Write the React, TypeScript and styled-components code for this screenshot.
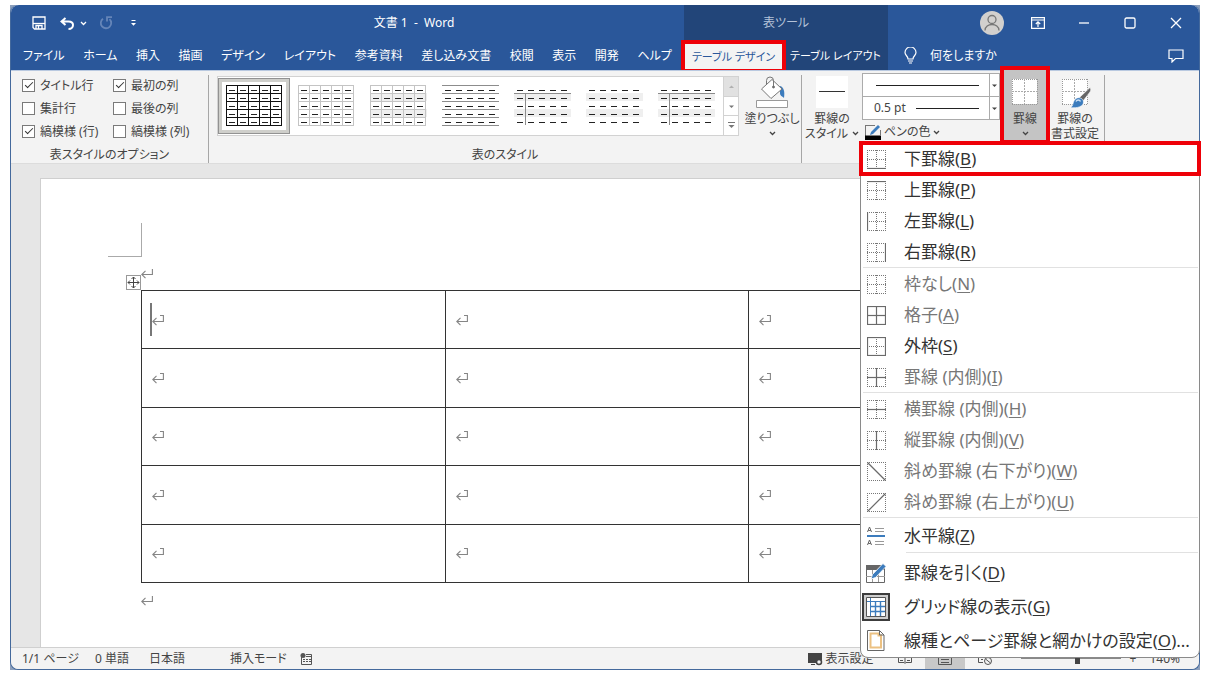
import React from "react";
import styled, { createGlobalStyle, css } from "styled-components";

const BLUE = "#2a579a";
const DARK_BLUE = "#224579";
const RED = "#ee0008";

const GlobalStyle = createGlobalStyle`
  *, *::before, *::after { box-sizing: border-box; }
  body {
    margin: 0;
    background: #fff;
    color: #444;
    font: 12px/16px "Noto Sans", "Noto Sans CJK JP", sans-serif;
    font-feature-settings: "palt";
    overflow: hidden;
  }
  button, input, select { font: inherit; font-feature-settings: inherit; color: inherit; margin: 0; }
  button { border: 0; padding: 0; background: none; white-space: nowrap; }
  svg { display: block; flex: none; }
`;

/* ---------- window frame ---------- */

const Desktop = styled.div`
  margin: 5px 9px 7px 10px;
  background: #8c9fbc;
`;

const AppWindow = styled.div`
  display: flex;
  flex-direction: column;
  min-height: calc(100vh - 12px);
  border: 1px solid #44699c;
  border-top: 0;
  border-radius: 8px;
  background: #e6e6e6;
`;

const Header = styled.header`
  display: flex;
  height: 65px;
  background: ${BLUE};
  border-radius: 8px 8px 0 0;
  color: #fff;
`;

const HeaderMain = styled.div`
  flex: 0 0 673px;
`;

const HeaderEnd = styled.div`
  flex: 1;
`;

const HeaderContext = styled.div`
  flex: 0 0 204px;
  background: ${DARK_BLUE};
`;

const TitleRow = styled.div`
  display: flex;
  align-items: center;
  height: 36px;
`;

const ContextTitle = styled(TitleRow)`
  justify-content: center;
  color: #b4c2d8;
`;

const QuickAccess = styled.div`
  display: flex;
  align-items: center;
  gap: 8px;
  padding-left: 21px;
`;

const IconButton = styled.button<{ $dim?: boolean }>`
  display: flex;
  align-items: center;
  justify-content: center;
  color: ${(p) => (p.$dim ? "#6585b8" : "#fff")};
`;

const UndoButton = styled(IconButton)`
  gap: 5px;
  padding: 0 4px 0 6px;
`;

const CustomizeButton = styled(IconButton)`
  padding-left: 10px;
`;

const DocTitle = styled.h1`
  flex: 1;
  margin: 0;
  padding-left: 8px;
  font-size: 12px;
  font-weight: 400;
  text-align: center;
  white-space: pre;
`;

const TabRow = styled.nav`
  display: flex;
  justify-content: space-between;
  height: 29px;
  padding: 0 12px;
`;

const ContextTabs = styled(TabRow)`
  padding: 0;
  font-size: 11px;
`;

const Tab = styled.button<{ $active?: boolean }>`
  display: flex;
  align-items: center;
  justify-content: center;
  color: #fff;
  ${(p) =>
    p.$active &&
    css`
      flex: 0 0 99px;
      margin-top: 2px;
      background: #f3f3f3;
      color: ${BLUE};
      outline: 4px solid ${RED};
      outline-offset: -1px;
    `}
`;

const PlainContextTab = styled(Tab)`
  flex: 1;
`;

const WindowButtons = styled.div`
  display: flex;
  flex: 1;
  justify-content: flex-end;
`;

const WindowButton = styled(IconButton)`
  width: 46px;
  height: 32px;
`;

const TellMeRow = styled.div`
  display: flex;
  align-items: center;
  gap: 13px;
  height: 29px;
  padding: 0 15px 0 16px;
`;

const TellMe = styled.button`
  flex: 1;
  text-align: left;
`;

/* ---------- ribbon ---------- */

const Ribbon = styled.section`
  display: flex;
  height: 94px;
  background: #f3f3f3;
  border-top: 1px solid #b9c9e0;
  border-bottom: 1px solid #dcdcdc;
`;

const Group = styled.div`
  display: flex;
  flex-direction: column;
  margin: 4px 0 0;
  padding-bottom: 0;
  border-right: 1px solid #a6a6a6;
`;

const GroupBody = styled.div`
  display: flex;
  flex: 1;
`;

const GroupLabel = styled.div`
  text-align: center;
`;

const OptionGrid = styled.div`
  display: grid;
  grid-template-columns: 91px 95px;
  grid-auto-rows: 23px;
  flex: 1;
  margin-top: -1px;
  padding-left: 11px;
`;

const Option = styled.label`
  display: flex;
  align-items: center;
  gap: 5px;
  white-space: nowrap;
`;

const Check = styled.input`
  appearance: none;
  flex: none;
  width: 13px;
  height: 13px;
  border: 1px solid #7a7a7a;
  background: #fff;
  &:checked::after {
    content: "";
    display: block;
    width: 8px;
    height: 4px;
    margin: 2px 0 0 2px;
    border: solid #333;
    border-width: 0 0 1px 1px;
    transform: rotate(-45deg);
  }
`;

const Gallery = styled.div`
  display: flex;
  width: 522px;
  height: 60px;
  margin: 1px 4px 0 8px;
  border: 1px solid #d2d2d2;
  background: #fff;
`;

const StyleButton = styled.button<{ $selected?: boolean }>`
  display: flex;
  align-items: center;
  justify-content: center;
  width: 72px;
  height: 56px;
  margin-top: 1px;
  ${(p) =>
    p.$selected &&
    css`
      border: 1px solid #929292;
      box-shadow: inset 0 0 0 3px #cfcfcb;
    `}
`;

const GalleryScroll = styled.div`
  display: flex;
  flex-direction: column;
  width: 15px;
  margin-left: auto;
  border-left: 1px solid #d2d2d2;
`;

const ScrollButton = styled.button<{ $off?: boolean }>`
  display: flex;
  flex: 1;
  align-items: center;
  justify-content: center;
  background: ${(p) => (p.$off ? "#e1e1e1" : "#fff")};
  color: ${(p) => (p.$off ? "#b0b0b0" : "#777")};
  & + & { border-top: 1px solid #d2d2d2; }
`;

const BigButton = styled.button<{ $width: number; $pressed?: boolean }>`
  display: flex;
  flex-direction: column;
  align-items: center;
  width: ${(p) => p.$width}px;
  height: ${(p) => (p.$pressed ? 70 : 66)}px;
  padding-top: ${(p) => (p.$pressed ? 6 : 1)}px;
  line-height: 15px;
  ${(p) =>
    p.$pressed &&
    css`
      background: #c4c4c4;
      outline: 4px solid ${RED};
    `}
`;

const BigLabel = styled.span`
  display: flex;
  align-items: center;
  gap: 4px;
  height: 15px;
  &:first-of-type { margin-top: 3px; }
`;

const PenColumn = styled.div`
  display: flex;
  flex-direction: column;
  width: 138px;
  margin-top: -2px;
`;

const LineBox = styled.div`
  display: flex;
  align-items: center;
  width: 138px;
  height: 24px;
  margin-bottom: -1px;
  padding-left: 11px;
  border: 1px solid #ababab;
  background: #fff;
`;

const WeightSelect = styled.select`
  appearance: none;
  width: 40px;
  padding: 0;
  border: 0;
  background: none;
`;

const SampleLine = styled.span`
  flex: 1;
  height: 1px;
  margin: 0 10px 0 2px;
  background: #222;
`;

const SelectArrow = styled.span`
  display: flex;
  align-items: center;
  justify-content: center;
  width: 10px;
  height: 22px;
  border-left: 1px solid #ababab;
`;

const PenColor = styled.button`
  display: flex;
  align-items: center;
  gap: 3px;
  height: 24px;
  padding: 2px 0 0 3px;
`;

const BordersSlot = styled.div`
  position: relative;
  z-index: 2;
  margin: -5px 0 0 4px;
`;

/* ---------- borders menu ---------- */

const Menu = styled.ul`
  position: absolute;
  top: 72px;
  left: -144px;
  width: 340px;
  margin: 0;
  padding: 0;
  list-style: none;
  border: 1px solid #8a8a8a;
  border-radius: 0 0 8px 8px;
  background: #fff;
  font-size: 17px;
`;

const MenuItem = styled.li<{ $tall?: boolean }>`
  display: flex;
  height: ${(p) => (p.$tall ? 34 : 31)}px;
`;

const MenuButton = styled.button<{ $off?: boolean; $marked?: boolean }>`
  display: flex;
  flex: 1;
  align-items: center;
  gap: 14px;
  padding: 1px 0 0 1px;
  color: ${(p) => (p.$off ? "#777" : "#333")};
  ${(p) =>
    p.$marked &&
    css`
      outline: 4px solid ${RED};
      outline-offset: -2px;
    `}
  u { text-underline-offset: 2px; text-decoration-thickness: 1px; }
`;

const MenuIcon = styled.span<{ $on?: boolean }>`
  display: flex;
  align-items: center;
  justify-content: center;
  width: 28px;
  height: 28px;
  ${(p) =>
    p.$on &&
    css`
      border: 2px solid #3c3c3c;
      background: #cdcdcd;
    `}
`;

const MenuRule = styled.li<{ $inset?: boolean }>`
  height: ${(p) => (p.$inset ? 3 : 1)}px;
  margin: 0 1px 0 ${(p) => (p.$inset ? 45 : 2)}px;
  border-top: 1px solid #e1e1e1;
`;

/* ---------- document ---------- */

const Workspace = styled.main`
  display: flex;
  flex: 1;
  min-height: 483px;
  padding: 14px 0 0 29px;
`;

const Page = styled.article`
  flex: 1;
  padding: 44px 100px 0 67px;
  border: 1px solid #cfcfcf;
  border-width: 1px 0 0 1px;
  background: #fff;
  overflow: hidden;
`;

const CornerMark = styled.div`
  width: 34px;
  height: 34px;
  border: solid #aaa;
  border-width: 0 1px 1px 0;
`;

const BodyText = styled.div`
  padding: 9px 0 0 33px;
`;

const Paragraph = styled.p`
  position: relative;
  margin: 0;
  height: 24px;
  padding-top: 2px;
`;

const TableHandle = styled.button`
  position: absolute;
  left: -15px;
  top: 9px;
  width: 15px;
  height: 15px;
  border: 1px solid #999;
  background: #fff;
`;

const DocTable = styled.table`
  width: 912px;
  height: 293px;
  table-layout: fixed;
  border-collapse: collapse;
`;

const Cell = styled.td`
  padding: 0 0 0 8px;
  border: 1px solid #333;
`;

const CellLine = styled.div<{ $caret?: boolean }>`
  display: flex;
  align-items: center;
  height: 33px;
  border-left: 2px solid ${(p) => (p.$caret ? "#777" : "transparent")};
`;

const AfterTable = styled.p`
  margin: 0;
  padding-top: 12px;
`;

/* ---------- status bar ---------- */

const StatusBar = styled.footer`
  display: flex;
  align-items: center;
  height: 22px;
  padding-left: 11px;
  border-top: 1px solid #d0d0d0;
  border-radius: 0 0 8px 8px;
  background: #f3f3f3;
`;

const StatusItem = styled.span<{ $width?: number }>`
  display: flex;
  align-items: center;
  gap: 2px;
  width: ${(p) => (p.$width ? p.$width + "px" : "auto")};
  white-space: nowrap;
`;

const StatusEnd = styled.div`
  display: flex;
  align-items: center;
  align-self: stretch;
  margin-left: auto;
  padding-right: 19px;
`;

const ViewButton = styled.button<{ $on?: boolean }>`
  display: flex;
  align-items: center;
  justify-content: center;
  align-self: stretch;
  width: 40px;
  background: ${(p) => (p.$on ? "#c8c8c8" : "none")};
`;

const ZoomSlider = styled.input`
  appearance: none;
  width: 100px;
  height: 11px;
  margin: 0 8px 0 16px;
  background: linear-gradient(#888, #888) center / 100% 1px no-repeat;
  &::-webkit-slider-thumb {
    appearance: none;
    width: 5px;
    height: 11px;
    background: #444;
  }
`;

/* ---------- drawings ---------- */

const Chevron = ({ color = "currentColor" }: { color?: string }) => (
  <svg width="7" height="5" viewBox="0 0 7 5" fill="none" stroke={color} strokeWidth="1.3">
    <path d="M1 1l2.5 2.5L6 1" />
  </svg>
);

const Triangle = ({ up, bar }: { up?: boolean; bar?: boolean }) => (
  <svg width="7" height="7" viewBox="0 0 7 7" fill="currentColor">
    {bar && <path d="M0 0h7v1H0z" />}
    <path d={up ? "M1 5h5L3.5 2.5z" : bar ? "M0.5 3h6L3.5 6z" : "M1 2.5h5L3.5 5z"} />
  </svg>
);

const CustomizeIcon = () => (
  <svg width="5" height="7" viewBox="0 0 5 7" fill="currentColor">
    <path d="M.5 0h4v1h-4zM0 3h5L2.500 5.800z" />
  </svg>
);

const ReturnMark = () => (
  <svg width="12" height="12" viewBox="0 0 12 12" fill="none" stroke="#858585" strokeWidth="1.1">
    <path d="M8 1.5h3.4v6H1M4.500 3.800L.8 7.500l3.700 3.700" />
  </svg>
);

const SmallReturn = () => (
  <svg width="12" height="12" viewBox="0 0 12 12" fill="none" stroke="#858585" strokeWidth="1.1">
    <path d="M11.400 1v5.500H1M4.500 2.800L.8 6.500l3.700 3.700" />
  </svg>
);

type Look = { grid?: string; rows?: boolean; head?: boolean; bands?: boolean };

const StyleSample = ({ grid, rows, head, bands }: Look) => {
  const xs = [0, 1, 2, 3, 4];
  return (
    <svg width="57" height="42" viewBox="0 0 57 42" shapeRendering="crispEdges">
      {bands && <path d="M0 8h57v8H0zM0 24h57v8H0z" fill="#efefef" />}
      {grid &&
        [0, 1, 2, 3, 4, 5].map((i) => (
          <path key={i} d={`M0 ${i * 8 + 0.5}h56M${i * 11 + 0.5} 0v41`} stroke={grid} />
        ))}
      {rows && [0, 1, 2, 3, 4, 5].map((i) => <path key={i} d={`M0 ${i * 8 + 0.5}h57`} stroke="#8c8c8c" />)}
      {head && <path d="M0 8.500h57M11.500 8v32" stroke="#8c8c8c" />}
      {xs.map((r) => xs.map((c) => <path key={`${r}${c}`} d={`M${c * 11 + 3} ${r * 8 + 5.5}h6`} stroke="#222" />))}
    </svg>
  );
};

type Edge = "top" | "bottom" | "left" | "right" | "midH" | "midV" | "down" | "up";

const EDGE_PATHS: Record<Edge, string> = {
  top: "M0 .5h19",
  bottom: "M0 18.5h19",
  left: "M.5 0v19",
  right: "M18.5 0v19",
  midH: "M0 9.5h19",
  midV: "M9.5 0v19",
  down: "M.5 .5l18 18",
  up: "M.5 18.5l18-18",
};

const BorderIcon = ({ solid = [], plain }: { solid?: Edge[]; plain?: boolean }) => (
  <svg width="19" height="19" viewBox="0 0 19 19" fill="none">
    {(Object.keys(EDGE_PATHS) as Edge[])
      .filter((e) => e !== "down" && e !== "up" && !solid.includes(e) && !(plain && e.startsWith("mid")))
      .map((e) => (
        <path key={e} d={EDGE_PATHS[e]} stroke="#777" strokeDasharray="1 1" />
      ))}
    {solid.map((e) => (
      <path key={e} d={EDGE_PATHS[e]} stroke="#6a6a6a" strokeWidth="1.2" />
    ))}
  </svg>
);

const BigBorderIcon = ({ brush }: { brush?: boolean }) => (
  <svg width="32" height="32" viewBox="0 0 32 32" fill="none">
    <path d="M3 3h25v25H3z" fill="#fff" />
    <path d="M3.5 3v25M28.5 3v25M3 3.5h26M3 28.5h26" stroke="#999" strokeDasharray="1 1" />
    <path d="M15.5 3v25M3 15.5h26" stroke="#aaa" strokeDasharray="2 1" />
    {brush && (
      <>
        <path d="M31 11.500c1 1.500 1 3 0 4.500l-7 9-3.500-3.500z" fill="#666" stroke="#fff" strokeWidth=".6" />
        <path d="M11 31.500c4-1 2-6 6-9 3-2 7.500 0 7.500 3.500 0 4.500-6 6.500-13.500 5.500z" fill="#3c7cbd" stroke="#fff" strokeWidth=".6" />
        <path d="M17 25.500c1-2 3.500-2 4.500 0" stroke="#cfe2f5" strokeWidth="1.500" />
      </>
    )}
  </svg>
);

const BucketIcon = () => (
  <svg width="34" height="32" viewBox="0 0 34 32" fill="none" stroke="#777">
    <path d="M25 10c4 1 5 6 4 12-2-2-4-2-4-5z" fill="#3c7cbd" stroke="none" />
    <path d="M17 3.500L27 13 16 22.500 6.500 13z" fill="#fff" />
    <path d="M11.500 9V4.500a3.500 3.500 0 0 1 7 0V10" />
    <circle cx="18.500" cy="11" r="1" fill="#555" />
    <path d="M1.500 24.500h31v7h-31z" fill="#fff" stroke="#999" />
  </svg>
);

const LineStyleIcon = () => (
  <svg width="32" height="32" viewBox="0 0 32 32">
    <path d="M0 0h32v32H0z" fill="#fff" />
    <path d="M3 15.500h26" stroke="#333" />
  </svg>
);

const PenIcon = () => (
  <svg width="16" height="15" viewBox="0 0 16 15" fill="none">
    <path d="M1 .5h9M.5 0v11M15.500 5v5" stroke="#777" />
    <path d="M5 10l1-3 7-7 2 2-7 7z" fill="#3c7cbd" />
    <path d="M0 10.500h16V15H0z" fill="#000" />
  </svg>
);

const HorizontalRuleIcon = () => (
  <svg width="20" height="20" viewBox="0 0 20 20" fill="none" stroke="#666">
    <path d="M1.500 6l2-5 2 5M2.200 4.500h2.600M1.500 19l2-5 2 5M2.200 17.500h2.600" />
    <path d="M9 2.500h9M9 5.500h9M9 15.500h9M9 18.500h9" stroke="#999" />
    <path d="M1 10h18" stroke="#3c7cbd" strokeWidth="2" />
  </svg>
);

const DrawTableIcon = () => (
  <svg width="22" height="22" viewBox="0 0 22 22" fill="none">
    <path d="M1.500 3.500h18v17h-18z" fill="#fff" stroke="#666" />
    <path d="M1 3h19v5H1z" fill="#666" />
    <path d="M7.500 8v12M13.500 8v12M1 14.500h19" stroke="#999" />
    <path d="M6 17l1.500-4.500L18 1.500l3 3L10.500 15.500z" fill="#3c7cbd" stroke="#fff" strokeWidth=".8" />
  </svg>
);

const GridlinesIcon = () => (
  <svg width="20" height="20" viewBox="0 0 20 20" fill="none">
    <path d="M.5 .5h19v19H.5z" fill="#fff" stroke="#555" />
    <path d="M4.500 1v18M1 4.500h18" stroke="#3c7cbd" />
    <path d="M9.500 4v15M14.500 4v15M4 9.500h15M4 14.500h15" stroke="#3c7cbd" strokeWidth="1.400" />
  </svg>
);

const PageBorderIcon = () => (
  <svg width="18" height="21" viewBox="0 0 18 21" fill="none">
    <path d="M.5 .5h12l4.500 4.500v15.500H.5z" fill="#fff" stroke="#666" />
    <path d="M3.500 3.500h8v2h2.500v12H3.500z" stroke="#ecc182" strokeWidth="2" />
    <path d="M12.500 .5V5H17" stroke="#666" />
  </svg>
);

const SaveIcon = () => (
  <svg width="14" height="14" viewBox="0 0 14 14" fill="none" stroke="#fff" strokeWidth="1.300">
    <path d="M1 1h12v12H2.500L1 11.500z" />
    <path d="M1 7.500h12" />
    <path d="M4 13V9.500h6V13M6.500 10v3" />
  </svg>
);

const UndoIcon = () => (
  <svg width="15" height="13" viewBox="0 0 15 13" fill="none" stroke="currentColor" strokeWidth="2">
    <path d="M5.500 1L1.500 4.500l4 3.500M2 4.500h6.500c3 0 4.500 1.500 4.500 3.500s-1.500 4-4.500 4" />
  </svg>
);

const RedoIcon = () => (
  <svg width="14" height="14" viewBox="0 0 14 14" fill="none" stroke="currentColor" strokeWidth="1.800">
    <path d="M4 2.800A5.200 5.200 0 1 0 10.500 3.200" />
    <path d="M8 5.500V1.200h5" />
  </svg>
);

const AvatarIcon = () => (
  <svg width="24" height="24" viewBox="0 0 24 24" fill="none" stroke="#777" strokeWidth="1.300">
    <circle cx="12" cy="12" r="12" fill="#d2d0ce" stroke="none" />
    <circle cx="12" cy="8.500" r="4" />
    <path d="M5 19.500c0-8 14-8 14 0" />
  </svg>
);

const BulbIcon = () => (
  <svg width="13" height="17" viewBox="0 0 13 17" fill="none" stroke="#fff" strokeWidth="1.200">
    <path d="M4 12c0-3-3-3.500-3-6.500a5.300 5.300 0 0 1 11 0C12 8.500 9 9 9 12zM4 14h5M5 16h3" />
  </svg>
);

const CommentIcon = () => (
  <svg width="16" height="14" viewBox="0 0 16 14" fill="none" stroke="#fff" strokeWidth="1.200">
    <path d="M1 1h14v8.500H7.500L4 13V9.500H1z" />
  </svg>
);

const HandleIcon = () => (
  <svg width="13" height="13" viewBox="0 0 13 13" fill="none" stroke="#444">
    <path d="M6.500 1v11M1 6.500h11M4.500 3l2-2 2 2M4.500 10l2 2 2-2M3 4.500l-2 2 2 2M10 4.500l2 2-2 2" />
  </svg>
);

const MacroIcon = () => (
  <svg width="13" height="12" viewBox="0 0 13 12" fill="none" stroke="#555">
    <path d="M1.500 4v7.500h10v-10H6M6 3.500h6" />
    <path d="M3 6.500h8M3 8.500h8" strokeDasharray="2 1" />
    <circle cx="3" cy="2.500" r="2.500" fill="#555" stroke="none" />
  </svg>
);

const DisplayIcon = () => (
  <svg width="15" height="14" viewBox="0 0 15 14" fill="none">
    <path d="M0 1h14v7H9v3H0z" fill="#444" />
    <path d="M3 12.500h4" stroke="#444" />
    <circle cx="11" cy="10" r="2.500" fill="#f3f3f3" stroke="#444" strokeWidth="1.500" />
  </svg>
);

/* ---------- content ---------- */

const TABS = [
  "ファイル", "ホーム", "挿入", "描画", "デザイン", "レイアウト",
  "参考資料", "差し込み文書", "校閲", "表示", "開発", "ヘルプ",
];

const OPTIONS: [string, boolean][] = [
  ["タイトル行", true],
  ["最初の列", true],
  ["集計行", false],
  ["最後の列", false],
  ["縞模様 (行)", true],
  ["縞模様 (列)", false],
];

const LOOKS: Look[] = [
  { grid: "#111" },
  { grid: "#c4c4c4" },
  { grid: "#c4c4c4", bands: true },
  { rows: true },
  { head: true, bands: true },
  { bands: true },
  { head: true, bands: true },
];

type Entry = {
  text: string;
  letter: string;
  after?: string;
  icon: React.ReactNode;
  off?: boolean;
  marked?: boolean;
  tall?: boolean;
  on?: boolean;
};

const SECTIONS: Entry[][] = [
  [
    { text: "下罫線", letter: "B", icon: <BorderIcon solid={["bottom"]} />, marked: true },
    { text: "上罫線", letter: "P", icon: <BorderIcon solid={["top"]} /> },
    { text: "左罫線", letter: "L", icon: <BorderIcon solid={["left"]} /> },
    { text: "右罫線", letter: "R", icon: <BorderIcon solid={["right"]} /> },
  ],
  [
    { text: "枠なし", letter: "N", icon: <BorderIcon />, off: true },
    { text: "格子", letter: "A", icon: <BorderIcon solid={["top", "bottom", "left", "right", "midH", "midV"]} />, off: true },
    { text: "外枠", letter: "S", icon: <BorderIcon solid={["top", "bottom", "left", "right"]} /> },
    { text: "罫線 (内側)", letter: "I", icon: <BorderIcon solid={["midH", "midV"]} />, off: true },
  ],
  [
    { text: "横罫線 (内側)", letter: "H", icon: <BorderIcon solid={["midH"]} />, off: true },
    { text: "縦罫線 (内側)", letter: "V", icon: <BorderIcon solid={["midV"]} />, off: true },
    { text: "斜め罫線 (右下がり)", letter: "W", icon: <BorderIcon solid={["down"]} plain />, off: true },
    { text: "斜め罫線 (右上がり)", letter: "U", icon: <BorderIcon solid={["up"]} plain />, off: true },
  ],
  [{ text: "水平線", letter: "Z", icon: <HorizontalRuleIcon />, tall: true }],
  [
    { text: "罫線を引く", letter: "D", icon: <DrawTableIcon />, tall: true },
    { text: "グリッド線の表示", letter: "G", icon: <GridlinesIcon />, tall: true, on: true },
    { text: "線種とページ罫線と網かけの設定", letter: "O", after: "...", icon: <PageBorderIcon />, tall: true },
  ],
];

const BordersMenu = () => (
  <Menu>
    {SECTIONS.map((entries, s) => (
      <React.Fragment key={s}>
        {s > 0 && <MenuRule $inset={s === 4} />}
        {entries.map((e) => (
          <MenuItem key={e.letter} $tall={e.tall}>
            <MenuButton $off={e.off} $marked={e.marked} disabled={e.off}>
              <MenuIcon $on={e.on}>{e.icon}</MenuIcon>
              <span>
                {e.text}(<u>{e.letter}</u>){e.after}
              </span>
            </MenuButton>
          </MenuItem>
        ))}
      </React.Fragment>
    ))}
  </Menu>
);

const LineStyleSelect = styled.select`
  appearance: none;
  width: 0;
  padding: 0;
  border: 0;
`;

export default function App() {
  return (
    <Desktop>
      <GlobalStyle />
      <AppWindow>
        <Header>
          <HeaderMain>
            <TitleRow>
              <QuickAccess>
                <IconButton aria-label="上書き保存"><SaveIcon /></IconButton>
                <UndoButton aria-label="元に戻す"><UndoIcon /><Chevron /></UndoButton>
                <IconButton aria-label="繰り返し" $dim><RedoIcon /></IconButton>
                <CustomizeButton aria-label="カスタマイズ"><CustomizeIcon /></CustomizeButton>
              </QuickAccess>
              <DocTitle>{"文書 1  -  Word"}</DocTitle>
            </TitleRow>
            <TabRow>
              {TABS.map((t) => (
                <Tab key={t}>{t}</Tab>
              ))}
            </TabRow>
          </HeaderMain>
          <HeaderContext>
            <ContextTitle>表ツール</ContextTitle>
            <ContextTabs>
              <Tab $active>テーブル デザイン</Tab>
              <PlainContextTab>テーブル レイアウト</PlainContextTab>
            </ContextTabs>
          </HeaderContext>
          <HeaderEnd>
            <TitleRow>
              <WindowButtons>
                <WindowButton aria-label="アカウント"><AvatarIcon /></WindowButton>
                <WindowButton aria-label="リボンの表示オプション">
                  <svg width="14" height="12" viewBox="0 0 14 12" fill="none" stroke="#fff" strokeWidth="1.200">
                    <path d="M.6 .6h12.800v10.800H.6zM1 3h12M7 10V5M4.800 7L7 4.800 9.200 7" />
                  </svg>
                </WindowButton>
                <WindowButton aria-label="最小化">
                  <svg width="12" height="12" viewBox="0 0 12 12" stroke="#fff" strokeWidth="1.300"><path d="M1 6h10" /></svg>
                </WindowButton>
                <WindowButton aria-label="最大化">
                  <svg width="12" height="12" viewBox="0 0 12 12" fill="none" stroke="#fff" strokeWidth="1.300">
                    <rect x="1" y="1" width="10" height="10" rx="1.500" />
                  </svg>
                </WindowButton>
                <WindowButton aria-label="閉じる">
                  <svg width="12" height="12" viewBox="0 0 12 12" stroke="#fff" strokeWidth="1.300"><path d="M1 1l10 10M11 1L1 11" /></svg>
                </WindowButton>
              </WindowButtons>
            </TitleRow>
            <TellMeRow>
              <BulbIcon />
              <TellMe>何をしますか</TellMe>
              <IconButton aria-label="コメント"><CommentIcon /></IconButton>
            </TellMeRow>
          </HeaderEnd>
        </Header>

        <Ribbon>
          <Group>
            <OptionGrid>
              {OPTIONS.map(([label, on]) => (
                <Option key={label}>
                  <Check type="checkbox" defaultChecked={on} />
                  {label}
                </Option>
              ))}
            </OptionGrid>
            <GroupLabel>表スタイルのオプション</GroupLabel>
          </Group>
          <Group>
            <GroupBody>
              <Gallery>
                {LOOKS.map((look, i) => (
                  <StyleButton key={i} $selected={i === 0} aria-label={`表のスタイル ${i + 1}`}>
                    <StyleSample {...look} />
                  </StyleButton>
                ))}
                <GalleryScroll>
                  <ScrollButton $off aria-label="上へ"><Triangle up /></ScrollButton>
                  <ScrollButton aria-label="下へ"><Triangle /></ScrollButton>
                  <ScrollButton aria-label="その他"><Triangle bar /></ScrollButton>
                </GalleryScroll>
              </Gallery>
              <BigButton $width={58}>
                <BucketIcon />
                <BigLabel>塗りつぶし</BigLabel>
                <BigLabel><Chevron /></BigLabel>
              </BigButton>
            </GroupBody>
            <GroupLabel>表のスタイル</GroupLabel>
          </Group>
          <Group>
            <GroupBody>
              <BigButton $width={60}>
                <LineStyleIcon />
                <BigLabel>罫線の</BigLabel>
                <BigLabel>スタイル <Chevron /></BigLabel>
              </BigButton>
              <PenColumn>
                <LineBox>
                  <LineStyleSelect aria-label="線の種類"><option value="solid" aria-label="実線" /></LineStyleSelect>
                  <SampleLine />
                  <SelectArrow><Triangle /></SelectArrow>
                </LineBox>
                <LineBox>
                  <WeightSelect aria-label="線の太さ"><option>0.5 pt</option></WeightSelect>
                  <SampleLine />
                  <SelectArrow><Triangle /></SelectArrow>
                </LineBox>
                <PenColor><PenIcon />ペンの色<Chevron /></PenColor>
              </PenColumn>
              <BordersSlot>
                <BigButton $width={42} $pressed aria-expanded="true">
                  <BigBorderIcon />
                  <BigLabel>罫線</BigLabel>
                  <BigLabel><Chevron /></BigLabel>
                </BigButton>
                <BordersMenu />
              </BordersSlot>
              <BigButton $width={58}>
                <BigBorderIcon brush />
                <BigLabel>罫線の</BigLabel>
                <BigLabel>書式設定</BigLabel>
              </BigButton>
            </GroupBody>
          </Group>
        </Ribbon>

        <Workspace>
          <Page>
            <CornerMark />
            <BodyText>
              <Paragraph>
                <SmallReturn />
                <TableHandle aria-label="表の移動"><HandleIcon /></TableHandle>
              </Paragraph>
              <DocTable>
                <tbody>
                  {[0, 1, 2, 3, 4].map((r) => (
                    <tr key={r}>
                      {[0, 1, 2].map((c) => (
                        <Cell key={c}>
                          <CellLine $caret={r === 0 && c === 0}><ReturnMark /></CellLine>
                        </Cell>
                      ))}
                    </tr>
                  ))}
                </tbody>
              </DocTable>
              <AfterTable><SmallReturn /></AfterTable>
            </BodyText>
          </Page>
        </Workspace>

        <StatusBar>
          <StatusItem $width={73}>1/1 ページ</StatusItem>
          <StatusItem $width={54}>0 単語</StatusItem>
          <StatusItem $width={81}>日本語</StatusItem>
          <StatusItem $width={70}>挿入モード</StatusItem>
          <MacroIcon />
          <StatusEnd>
            <StatusItem $width={77}><DisplayIcon />表示設定</StatusItem>
            <ViewButton aria-label="閲覧モード">
              <svg width="14" height="12" viewBox="0 0 14 12" fill="none" stroke="#555"><path d="M.5 1.500h5.500l1 1 1-1h5.500v8H8l-1 1-1-1H.5zM7 2v8M2 7.500h3M9 7.500h3" /></svg>
            </ViewButton>
            <ViewButton $on aria-label="印刷レイアウト">
              <svg width="14" height="12" viewBox="0 0 14 12" fill="none" stroke="#555"><path d="M.5 .5h13v11H.5zM3 3.500h8M3 6.500h8M3 9.500h8" /></svg>
            </ViewButton>
            <ViewButton aria-label="Web レイアウト">
              <svg width="14" height="12" viewBox="0 0 14 12" fill="none" stroke="#555"><path d="M5 9.500H.5v-9h12V4M3 6.500h2" /><circle cx="10" cy="8" r="3.500" /><path d="M7.500 6l5 4" /></svg>
            </ViewButton>
            <ZoomSlider type="range" aria-label="ズーム" min="10" max="210" defaultValue="122" />
            <StatusItem $width={20}>+</StatusItem>
            <StatusItem>140%</StatusItem>
          </StatusEnd>
        </StatusBar>
      </AppWindow>
    </Desktop>
  );
}
